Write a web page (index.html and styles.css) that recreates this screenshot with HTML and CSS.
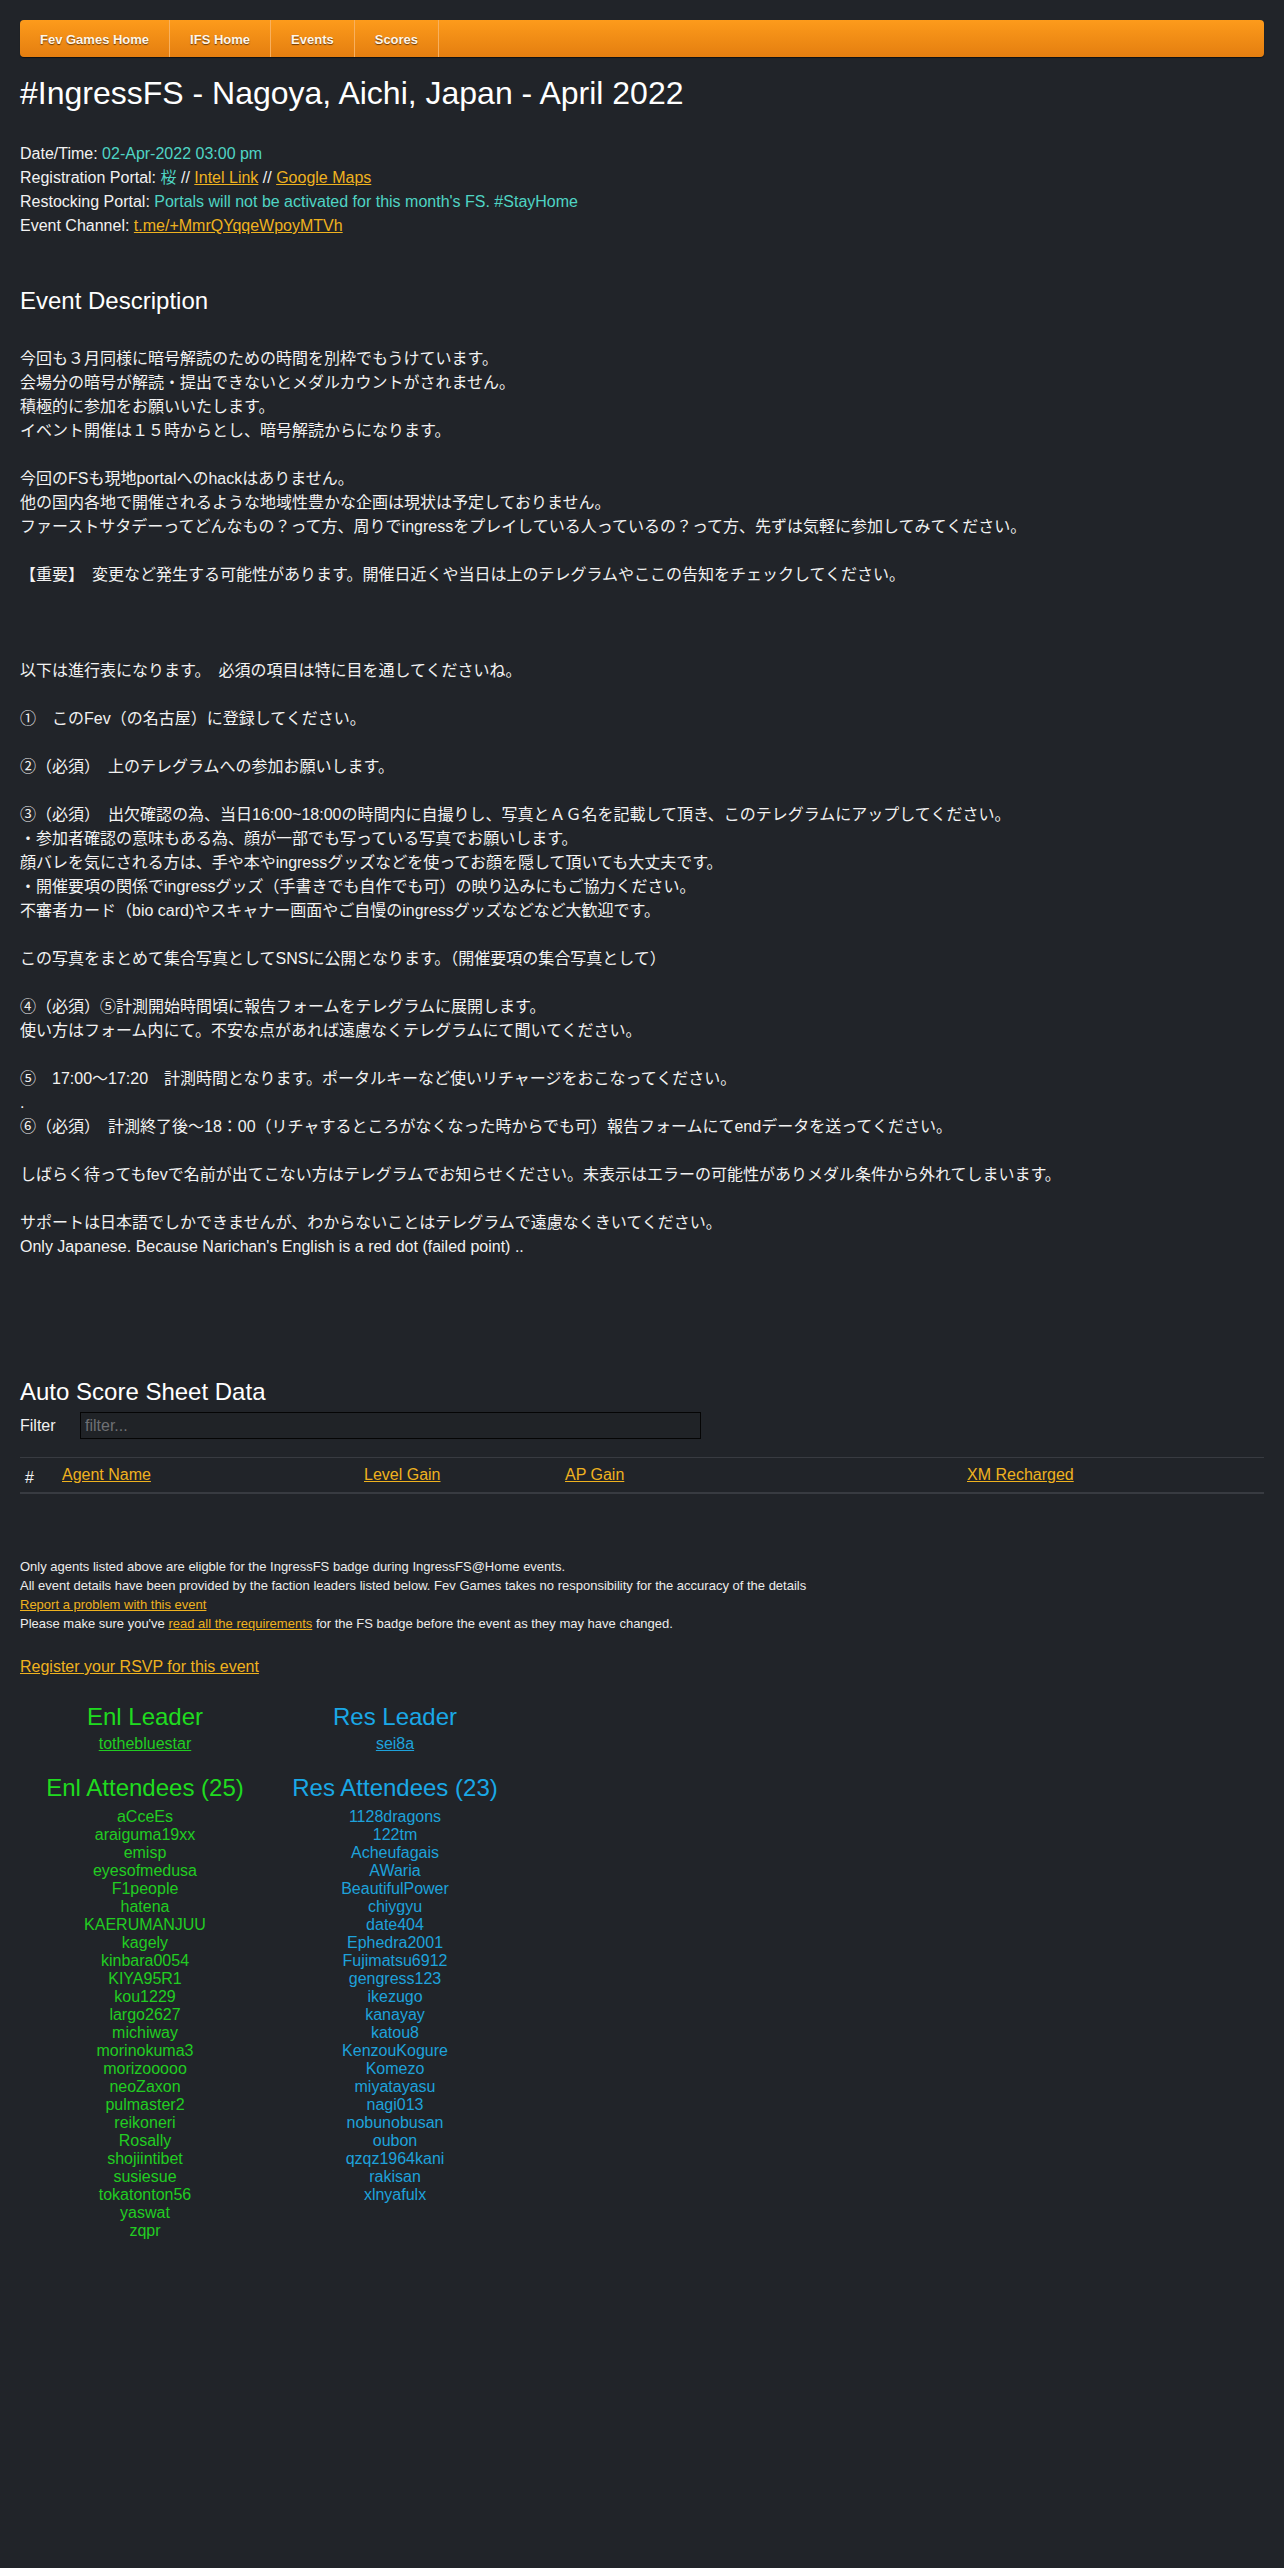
FILE: index.html
```html
<!DOCTYPE html>
<html lang="en">
<head>
<meta charset="utf-8">
<title>#IngressFS - Nagoya, Aichi, Japan - April 2022</title>
<link rel="stylesheet" href="styles.css">
</head>
<body>
<div class="page">
  <nav class="nav">
    <a href="#">Fev Games Home</a>
    <a href="#">IFS Home</a>
    <a href="#">Events</a>
    <a href="#">Scores</a>
  </nav>

  <h1 class="title">#IngressFS - Nagoya, Aichi, Japan - April 2022</h1>

  <div class="info">
    <div>Date/Time: <span class="val">02-Apr-2022 03:00 pm</span></div>
    <div>Registration Portal: <span class="val">桜</span> // <a href="#">Intel Link</a> // <a href="#">Google Maps</a></div>
    <div>Restocking Portal: <span class="val">Portals will not be activated for this month's FS. #StayHome</span></div>
    <div>Event Channel: <a href="#">t.me/+MmrQYqqeWpoyMTVh</a></div>
  </div>

  <h2 class="section-title">Event Description</h2>

  <div class="desc">
今回も３月同様に暗号解読のための時間を別枠でもうけています。<br>
会場分の暗号が解読・提出できないとメダルカウントがされません。<br>
積極的に参加をお願いいたします。<br>
イベント開催は１５時からとし、暗号解読からになります。<br>
<br>
今回のFSも現地portalへのhackはありません。<br>
他の国内各地で開催されるような地域性豊かな企画は現状は予定しておりません。<br>
ファーストサタデーってどんなもの？って方、周りでingressをプレイしている人っているの？って方、先ずは気軽に参加してみてください。<br>
<br>
【重要】　変更など発生する可能性があります。開催日近くや当日は上のテレグラムやここの告知をチェックしてください。<br>
<br>
<br>
<br>
以下は進行表になります。　必須の項目は特に目を通してくださいね。<br>
<br>
①　このFev（の名古屋）に登録してください。<br>
<br>
②（必須）　上のテレグラムへの参加お願いします。<br>
<br>
③（必須）　出欠確認の為、当日16:00~18:00の時間内に自撮りし、写真とＡＧ名を記載して頂き、このテレグラムにアップしてください。<br>
・参加者確認の意味もある為、顔が一部でも写っている写真でお願いします。<br>
顔バレを気にされる方は、手や本やingressグッズなどを使ってお顔を隠して頂いても大丈夫です。<br>
・開催要項の関係でingressグッズ（手書きでも自作でも可）の映り込みにもご協力ください。<br>
不審者カード（bio card)やスキャナー画面やご自慢のingressグッズなどなど大歓迎です。<br>
<br>
この写真をまとめて集合写真としてSNSに公開となります。（開催要項の集合写真として）<br>
<br>
④（必須）⑤計測開始時間頃に報告フォームをテレグラムに展開します。<br>
使い方はフォーム内にて。不安な点があれば遠慮なくテレグラムにて聞いてください。<br>
<br>
⑤　17:00～17:20　計測時間となります。ポータルキーなど使いリチャージをおこなってください。<br>
.<br>
⑥（必須）　計測終了後～18：00（リチャするところがなくなった時からでも可）報告フォームにてendデータを送ってください。<br>
<br>
しばらく待ってもfevで名前が出てこない方はテレグラムでお知らせください。未表示はエラーの可能性がありメダル条件から外れてしまいます。<br>
<br>
サポートは日本語でしかできませんが、わからないことはテレグラムで遠慮なくきいてください。<br>
Only Japanese. Because Narichan's English is a red dot (failed point) ..
  </div>

  <h2 class="section-title score-title">Auto Score Sheet Data</h2>

  <div class="filter">
    <label class="filter-label" for="filter">Filter</label>
    <input class="filter-input" id="filter" type="text" placeholder="filter...">
  </div>

  <table class="score-table">
    <colgroup>
      <col class="c-num">
      <col class="c-name">
      <col class="c-level">
      <col class="c-ap">
      <col class="c-xm">
    </colgroup>
    <thead>
      <tr>
        <th class="th-num">#</th>
        <th><a href="#">Agent Name</a></th>
        <th><a href="#">Level Gain</a></th>
        <th><a href="#">AP Gain</a></th>
        <th><a href="#">XM Recharged</a></th>
      </tr>
    </thead>
  </table>

  <div class="notes">
    <div>Only agents listed above are eligble for the IngressFS badge during IngressFS@Home events.</div>
    <div>All event details have been provided by the faction leaders listed below. Fev Games takes no responsibility for the accuracy of the details</div>
    <div><a href="#">Report a problem with this event</a></div>
    <div>Please make sure you've <a href="#">read all the requirements</a> for the FS badge before the event as they may have changed.</div>
  </div>

  <div class="rsvp"><a href="#">Register your RSVP for this event</a></div>

  <div class="factions">
    <div class="faction enl">
      <h3 class="faction-title">Enl Leader</h3>
      <a class="leader" href="#">tothebluestar</a>
      <h3 class="faction-title attendees-title">Enl Attendees (25)</h3>
      <div class="names">
        <div>aCceEs</div>
        <div>araiguma19xx</div>
        <div>emisp</div>
        <div>eyesofmedusa</div>
        <div>F1people</div>
        <div>hatena</div>
        <div>KAERUMANJUU</div>
        <div>kagely</div>
        <div>kinbara0054</div>
        <div>KIYA95R1</div>
        <div>kou1229</div>
        <div>largo2627</div>
        <div>michiway</div>
        <div>morinokuma3</div>
        <div>morizooooo</div>
        <div>neoZaxon</div>
        <div>pulmaster2</div>
        <div>reikoneri</div>
        <div>Rosally</div>
        <div>shojiintibet</div>
        <div>susiesue</div>
        <div>tokatonton56</div>
        <div>yaswat</div>
        <div>zqpr</div>
      </div>
    </div>
    <div class="faction res">
      <h3 class="faction-title">Res Leader</h3>
      <a class="leader" href="#">sei8a</a>
      <h3 class="faction-title attendees-title">Res Attendees (23)</h3>
      <div class="names">
        <div>1128dragons</div>
        <div>122tm</div>
        <div>Acheufagais</div>
        <div>AWaria</div>
        <div>BeautifulPower</div>
        <div>chiygyu</div>
        <div>date404</div>
        <div>Ephedra2001</div>
        <div>Fujimatsu6912</div>
        <div>gengress123</div>
        <div>ikezugo</div>
        <div>kanayay</div>
        <div>katou8</div>
        <div>KenzouKogure</div>
        <div>Komezo</div>
        <div>miyatayasu</div>
        <div>nagi013</div>
        <div>nobunobusan</div>
        <div>oubon</div>
        <div>qzqz1964kani</div>
        <div>rakisan</div>
        <div>xlnyafulx</div>
      </div>
    </div>
  </div>
</div>
</body>
</html>
```
FILE: styles.css
```css
html, body {
  background: #212429;
}
body {
  margin: 0;
  color: #f2f2f2;
  font-family: "Liberation Sans", Arial, "Noto Sans CJK JP", sans-serif;
  font-size: 16px;
  line-height: 24px;
}
.page {
  padding: 20px 20px 60px 20px;
}
a {
  color: #efb21f;
}

/* nav */
.nav {
  display: flex;
  height: 37px;
  border-radius: 4px;
  background: linear-gradient(#fd9b1b, #e47e10);
  box-shadow: 0 1px 1px rgba(0, 0, 0, 0.55);
}
.nav a {
  display: flex;
  align-items: center;
  padding: 2px 20px 0 20px;
  border-right: 1px solid #f8b05e;
  color: #fff6ea;
  font-weight: bold;
  font-size: 13px;
  text-decoration: none;
  text-shadow: 0 1px 1px rgba(60, 30, 0, 0.75);
}

.title {
  margin: 18px 0 0;
  font-size: 32px;
  font-weight: normal;
  line-height: 36px;
  color: #ffffff;
}
.info {
  margin-top: 31px;
}
.val {
  color: #4fd4c4;
}
.section-title {
  margin: 49px 0 0;
  font-size: 24px;
  font-weight: normal;
  line-height: 28px;
  color: #ffffff;
}
.desc {
  margin-top: 32px;
}
.score-title {
  margin-top: 119px;
}

/* filter */
.filter {
  display: flex;
  align-items: center;
  margin-top: 6px;
  height: 27px;
}
.filter-label {
  width: 60px;
}
.filter-input {
  width: 621px;
  height: 27px;
  box-sizing: border-box;
  margin: 0;
  padding: 0 4px;
  background: #202327;
  border: 1px solid #050505;
  color: #dddddd;
  font-family: "Liberation Sans", Arial, sans-serif;
  font-size: 16px;
  outline: none;
}
.filter-input::placeholder {
  color: #6e7074;
}

/* table */
.score-table {
  margin-top: 18px;
  width: 100%;
  table-layout: fixed;
  border-collapse: collapse;
  border-top: 1px solid #383b41;
  border-bottom: 2px solid #383b41;
}
.c-num { width: 37px; }
.c-name { width: 302px; }
.c-level { width: 201px; }
.c-ap { width: 402px; }
.score-table th {
  padding: 8px 5px;
  text-align: left;
  font-weight: normal;
  line-height: 18px;
}
.score-table .th-num {
  padding-top: 11px;
  padding-bottom: 5px;
}

/* notes */
.notes {
  margin-top: 63px;
  font-size: 13px;
  line-height: 19px;
  color: #ececec;
}
.rsvp {
  margin-top: 22px;
}

/* factions */
.factions {
  display: grid;
  grid-template-columns: 250px 250px;
  margin-top: 24px;
  text-align: center;
}
.faction {
  display: flex;
  flex-direction: column;
  align-items: center;
}
.faction-title {
  margin: 0;
  font-size: 24px;
  font-weight: normal;
  line-height: 28px;
}
.leader {
  margin-top: 4px;
  line-height: 18px;
}
.attendees-title {
  margin-top: 21px;
}
.names {
  margin-top: 6px;
  line-height: 18px;
}
.enl .faction-title { color: #1fdb1f; }
.enl .leader, .enl .names { color: #22cd22; }
.res .faction-title { color: #1aa8e6; }
.res .leader, .res .names { color: #1ea2db; }
```
